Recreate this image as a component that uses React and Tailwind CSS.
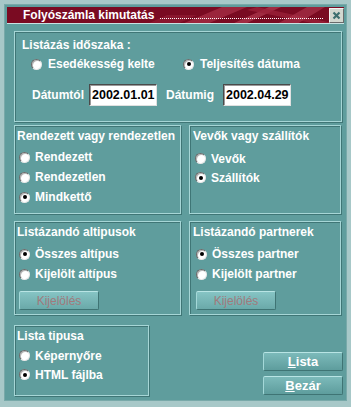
import React from "react";

const font = "font-['Liberation_Sans',Arial,sans-serif]";

function Radio({ checked, label, gap = "ml-[5px]" }) {
  return (
    <div className="flex items-center">
      <span className="relative w-[11px] h-[11px] rounded-full bg-white border border-t-[#6a6a6a] border-l-[#6a6a6a] border-b-[#e8e8e8] border-r-[#e8e8e8] shadow-[inset_1px_1px_0_#b8b8b8] flex items-center justify-center shrink-0">
        {checked && <span className="w-[4px] h-[4px] rounded-full bg-black" />}
      </span>
      <span className={`${gap} text-white font-bold text-[12px] leading-[14px]`}>
        {label}
      </span>
    </div>
  );
}

function Group({ title, className, children, titlePad = "pl-[2px]" }) {
  return (
    <div
      className={`border border-[#a6d6d6] shadow-[inset_1px_1px_0_#3f7676,1px_1px_0_#3f7676] pt-[3px] ${className}`}
    >
      <div className={`${titlePad} text-white font-bold text-[12px] leading-[14px]`}>
        {title}
      </div>
      {children}
    </div>
  );
}

function DateBox({ value }) {
  return (
    <div className="w-[68px] h-[22px] bg-white border border-t-[#4a4a4a] border-l-[#4a4a4a] border-b-[#e0e0e0] border-r-[#e0e0e0] shadow-[inset_1px_1px_0_#9a9a9a] flex items-center pl-[2px] text-black text-[12.5px]">
      {value}
    </div>
  );
}

function TealButton({ children, disabled }) {
  return (
    <div
      className={`w-[80px] h-[19px] rounded-[2px] border border-t-[#b8e4e4] border-l-[#a4d8d8] border-b-[#3f7474] border-r-[#3f7474] flex items-center justify-center ${
        disabled
          ? "bg-gradient-to-b from-[#86c4c4] to-[#6aa9a9] text-[#a07a7c] text-[12px]"
          : "bg-gradient-to-b from-[#7cbaba] to-[#5e9d9d] text-white font-bold text-[13px]"
      }`}
    >
      {children}
    </div>
  );
}

export default function App() {
  return (
    <div className={`w-[351px] h-[407px] bg-[#a7c8c8] pt-[4px] px-[4px] ${font}`}>
      <div className="w-[343px] h-[397px] bg-[#5f9d9d] border border-[#78a9a9] flex flex-col">
        {/* TITLE BAR */}
        <div className="relative mt-[2px] mx-[2px] h-[17px] bg-[#7a0b22] border-b border-[#c9e2e2] flex items-center overflow-hidden">
          <svg className="absolute left-0 top-0" width="337" height="17">
            <polygon points="175,17 215,0 240,0 200,17" fill="#a42c44" opacity="0.8" />
            <polygon points="225,17 262,0 274,0 238,17" fill="#b03a50" opacity="0.7" />
            <polygon points="250,0 330,17 310,17 240,3" fill="#9a2038" opacity="0.8" />
            <polygon points="270,17 300,0 318,0 290,17" fill="#a83248" opacity="0.7" />
            <polygon points="140,17 160,8 190,8 170,17" fill="#8e1a32" opacity="0.8" />
            <line x1="153" y1="11.5" x2="317" y2="11.5" stroke="#ffffff" strokeWidth="1" strokeDasharray="1 1" />
          </svg>
          <span className="relative ml-[16px] text-white font-bold text-[12px] leading-[15px] scale-y-[1.1]">
            Folyószámla kimutatás
          </span>
          <div className="relative ml-auto w-[15px] h-[15px] bg-[#d3d8d0] border border-t-[#f4f4f4] border-l-[#f4f4f4] border-b-[#6b6b6b] border-r-[#6b6b6b] flex items-center justify-center">
            <svg width="9" height="9" viewBox="0 0 9 9">
              <path d="M1.5 1.5 L7.5 7.5 M7.5 1.5 L1.5 7.5" stroke="#3e6f6f" strokeWidth="2.2" />
            </svg>
          </div>
        </div>

        <div className="ml-[9px] mr-[4px] flex flex-col">
          {/* LISTAZAS IDOSZAKA */}
          <Group
            title="Listázás időszaka :"
            className="mt-[7px] h-[91px] pt-[6px]"
            titlePad="pl-[7px]"
          >
            <div className="mt-[5px] flex items-center">
              <div className="ml-[16px] w-[152px]">
                <Radio label="Esedékesség kelte" gap="ml-[6px]" />
              </div>
              <Radio checked label="Teljesítés dátuma" gap="ml-[6px]" />
            </div>
            <div className="mt-[13px] flex items-center text-white font-bold text-[12px]">
              <span className="ml-[17px] w-[57px]">Dátumtól</span>
              <DateBox value="2002.01.01" />
              <span className="ml-[9px] w-[57px]">Dátumig</span>
              <DateBox value="2002.04.29" />
            </div>
          </Group>

          {/* ROW 2 */}
          <div className="mt-[3px] flex gap-[8px]">
            <Group title="Rendezett vagy rendezetlen" className="w-[167px] h-[89px]">
              <div className="mt-[4px] ml-[4px] flex flex-col">
                <div className="h-[20px] flex items-center"><Radio label="Rendezett" /></div>
                <div className="h-[20px] flex items-center"><Radio label="Rendezetlen" /></div>
                <div className="h-[20px] flex items-center"><Radio checked label="Mindkettő" /></div>
              </div>
            </Group>
            <Group title="Vevők vagy szállítók" className="w-[152px] h-[89px]" titlePad="pl-[3px]">
              <div className="mt-[6px] ml-[5px] flex flex-col">
                <div className="h-[19px] flex items-center"><Radio label="Vevők" /></div>
                <div className="h-[19px] flex items-center"><Radio checked label="Szállítók" /></div>
              </div>
            </Group>
          </div>

          {/* ROW 3 */}
          <div className="mt-[7px] flex gap-[8px]">
            <Group title="Listázandó altipusok" className="w-[167px] h-[94px]">
              <div className="mt-[5px] ml-[4px] flex flex-col">
                <div className="h-[20px] flex items-center"><Radio checked label="Összes altípus" /></div>
                <div className="h-[20px] flex items-center"><Radio label="Kijelölt altípus" /></div>
                <div className="mt-[7px]">
                  <TealButton disabled>Kijelölés</TealButton>
                </div>
              </div>
            </Group>
            <Group title="Listázandó partnerek" className="w-[152px] h-[94px]" titlePad="pl-[3px]">
              <div className="mt-[5px] ml-[6px] flex flex-col">
                <div className="h-[20px] flex items-center"><Radio checked label="Összes partner" /></div>
                <div className="h-[20px] flex items-center"><Radio label="Kijelölt partner" /></div>
                <div className="mt-[7px]">
                  <TealButton disabled>Kijelölés</TealButton>
                </div>
              </div>
            </Group>
          </div>

          {/* ROW 4 */}
          <div className="mt-[10px] flex">
            <Group title="Lista tipusa" className="w-[135px] h-[71px]">
              <div className="mt-[3px] ml-[4px] flex flex-col">
                <div className="h-[19px] flex items-center"><Radio label="Képernyőre" /></div>
                <div className="h-[19px] flex items-center"><Radio checked label="HTML fájlba" /></div>
              </div>
            </Group>
            <div className="ml-auto mr-[-1px] mt-[27px] flex flex-col gap-[5px]">
              <TealButton>
                <span><span className="underline">L</span>ista</span>
              </TealButton>
              <TealButton>
                <span><span className="underline">B</span>ezár</span>
              </TealButton>
            </div>
          </div>
        </div>
      </div>
    </div>
  );
}
